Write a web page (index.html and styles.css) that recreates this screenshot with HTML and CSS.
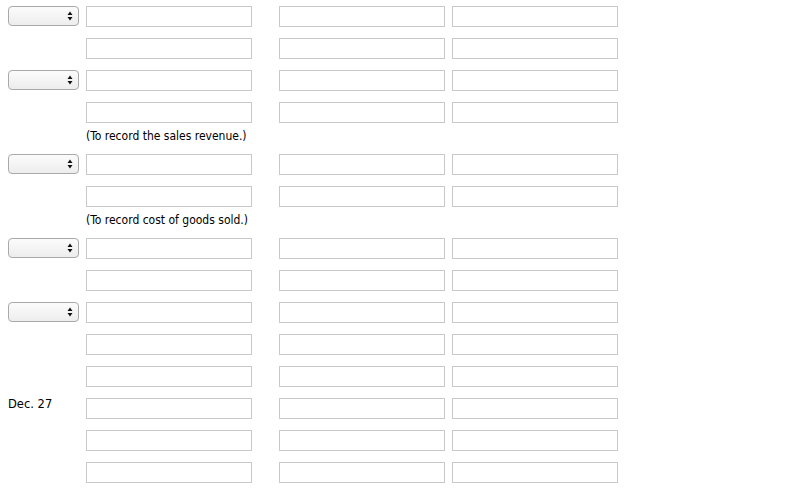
FILE: index.html
```html
<!DOCTYPE html>
<html>
<head>
<meta charset="utf-8">
<link rel="stylesheet" href="styles.css">
</head>
<body>
<div class="sheet">
  <div class="row"><div class="c1"><div class="sel"><span class="arr"><svg width="6" height="10" viewBox="0 0 6 10"><path d="M3 0.5L5.5 4H0.5Z M0.5 6H5.5L3 9.5Z" fill="#111"/></svg></span></div></div><div class="inp a"></div><div class="inp b"></div><div class="inp c"></div></div>
  <div class="row"><div class="c1"></div><div class="inp a"></div><div class="inp b"></div><div class="inp c"></div></div>
  <div class="row"><div class="c1"><div class="sel"><span class="arr"><svg width="6" height="10" viewBox="0 0 6 10"><path d="M3 0.5L5.5 4H0.5Z M0.5 6H5.5L3 9.5Z" fill="#111"/></svg></span></div></div><div class="inp a"></div><div class="inp b"></div><div class="inp c"></div></div>
  <div class="row"><div class="c1"></div><div class="inp a"></div><div class="inp b"></div><div class="inp c"></div></div>
  <div class="note">(To record the sales revenue.)</div>
  <div class="row"><div class="c1"><div class="sel"><span class="arr"><svg width="6" height="10" viewBox="0 0 6 10"><path d="M3 0.5L5.5 4H0.5Z M0.5 6H5.5L3 9.5Z" fill="#111"/></svg></span></div></div><div class="inp a"></div><div class="inp b"></div><div class="inp c"></div></div>
  <div class="row"><div class="c1"></div><div class="inp a"></div><div class="inp b"></div><div class="inp c"></div></div>
  <div class="note">(To record cost of goods sold.)</div>
  <div class="row"><div class="c1"><div class="sel"><span class="arr"><svg width="6" height="10" viewBox="0 0 6 10"><path d="M3 0.5L5.5 4H0.5Z M0.5 6H5.5L3 9.5Z" fill="#111"/></svg></span></div></div><div class="inp a"></div><div class="inp b"></div><div class="inp c"></div></div>
  <div class="row"><div class="c1"></div><div class="inp a"></div><div class="inp b"></div><div class="inp c"></div></div>
  <div class="row"><div class="c1"><div class="sel"><span class="arr"><svg width="6" height="10" viewBox="0 0 6 10"><path d="M3 0.5L5.5 4H0.5Z M0.5 6H5.5L3 9.5Z" fill="#111"/></svg></span></div></div><div class="inp a"></div><div class="inp b"></div><div class="inp c"></div></div>
  <div class="row"><div class="c1"></div><div class="inp a"></div><div class="inp b"></div><div class="inp c"></div></div>
  <div class="row"><div class="c1"></div><div class="inp a"></div><div class="inp b"></div><div class="inp c"></div></div>
  <div class="row"><div class="c1 date">Dec. 27</div><div class="inp a"></div><div class="inp b"></div><div class="inp c"></div></div>
  <div class="row"><div class="c1"></div><div class="inp a"></div><div class="inp b"></div><div class="inp c"></div></div>
  <div class="row"><div class="c1"></div><div class="inp a"></div><div class="inp b"></div><div class="inp c"></div></div>
</div>
</body>
</html>
```
FILE: styles.css
```css
html, body {
  margin: 0;
  padding: 0;
  background: #fff;
}
body {
  font-family: "DejaVu Sans Condensed", "DejaVu Sans", sans-serif;
  font-size: 12px;
  color: #000;
}
.sheet {
  display: flex;
  flex-direction: column;
  padding-left: 8px;
}
.row {
  display: grid;
  grid-template-columns: 71px 166px 13px 166px 166px;
  column-gap: 7px;
  height: 32px;
  padding-top: 6px;
  box-sizing: border-box;
  align-items: start;
}
.c1 {
  grid-column: 1;
  height: 21px;
}
.a { grid-column: 2; }
.b { grid-column: 4; }
.c { grid-column: 5; }
.inp {
  height: 21px;
  border: 1px solid #c9c9c9;
  box-sizing: border-box;
  background: #fff;
}
.sel {
  width: 71px;
  height: 20px;
  box-sizing: border-box;
  border: 1px solid #a9a9a9;
  border-radius: 4px;
  background: linear-gradient(#fbfbfb, #ededed);
  display: flex;
  justify-content: flex-end;
  align-items: center;
  padding-right: 5px;
}
.arr {
  display: flex;
}
.note {
  height: 20px;
  padding-left: 78px;
  line-height: 17px;
  box-sizing: border-box;
}
.date {
  font-family: "DejaVu Sans", sans-serif;
  font-size: 11.5px;
  line-height: 13px;
}
```
